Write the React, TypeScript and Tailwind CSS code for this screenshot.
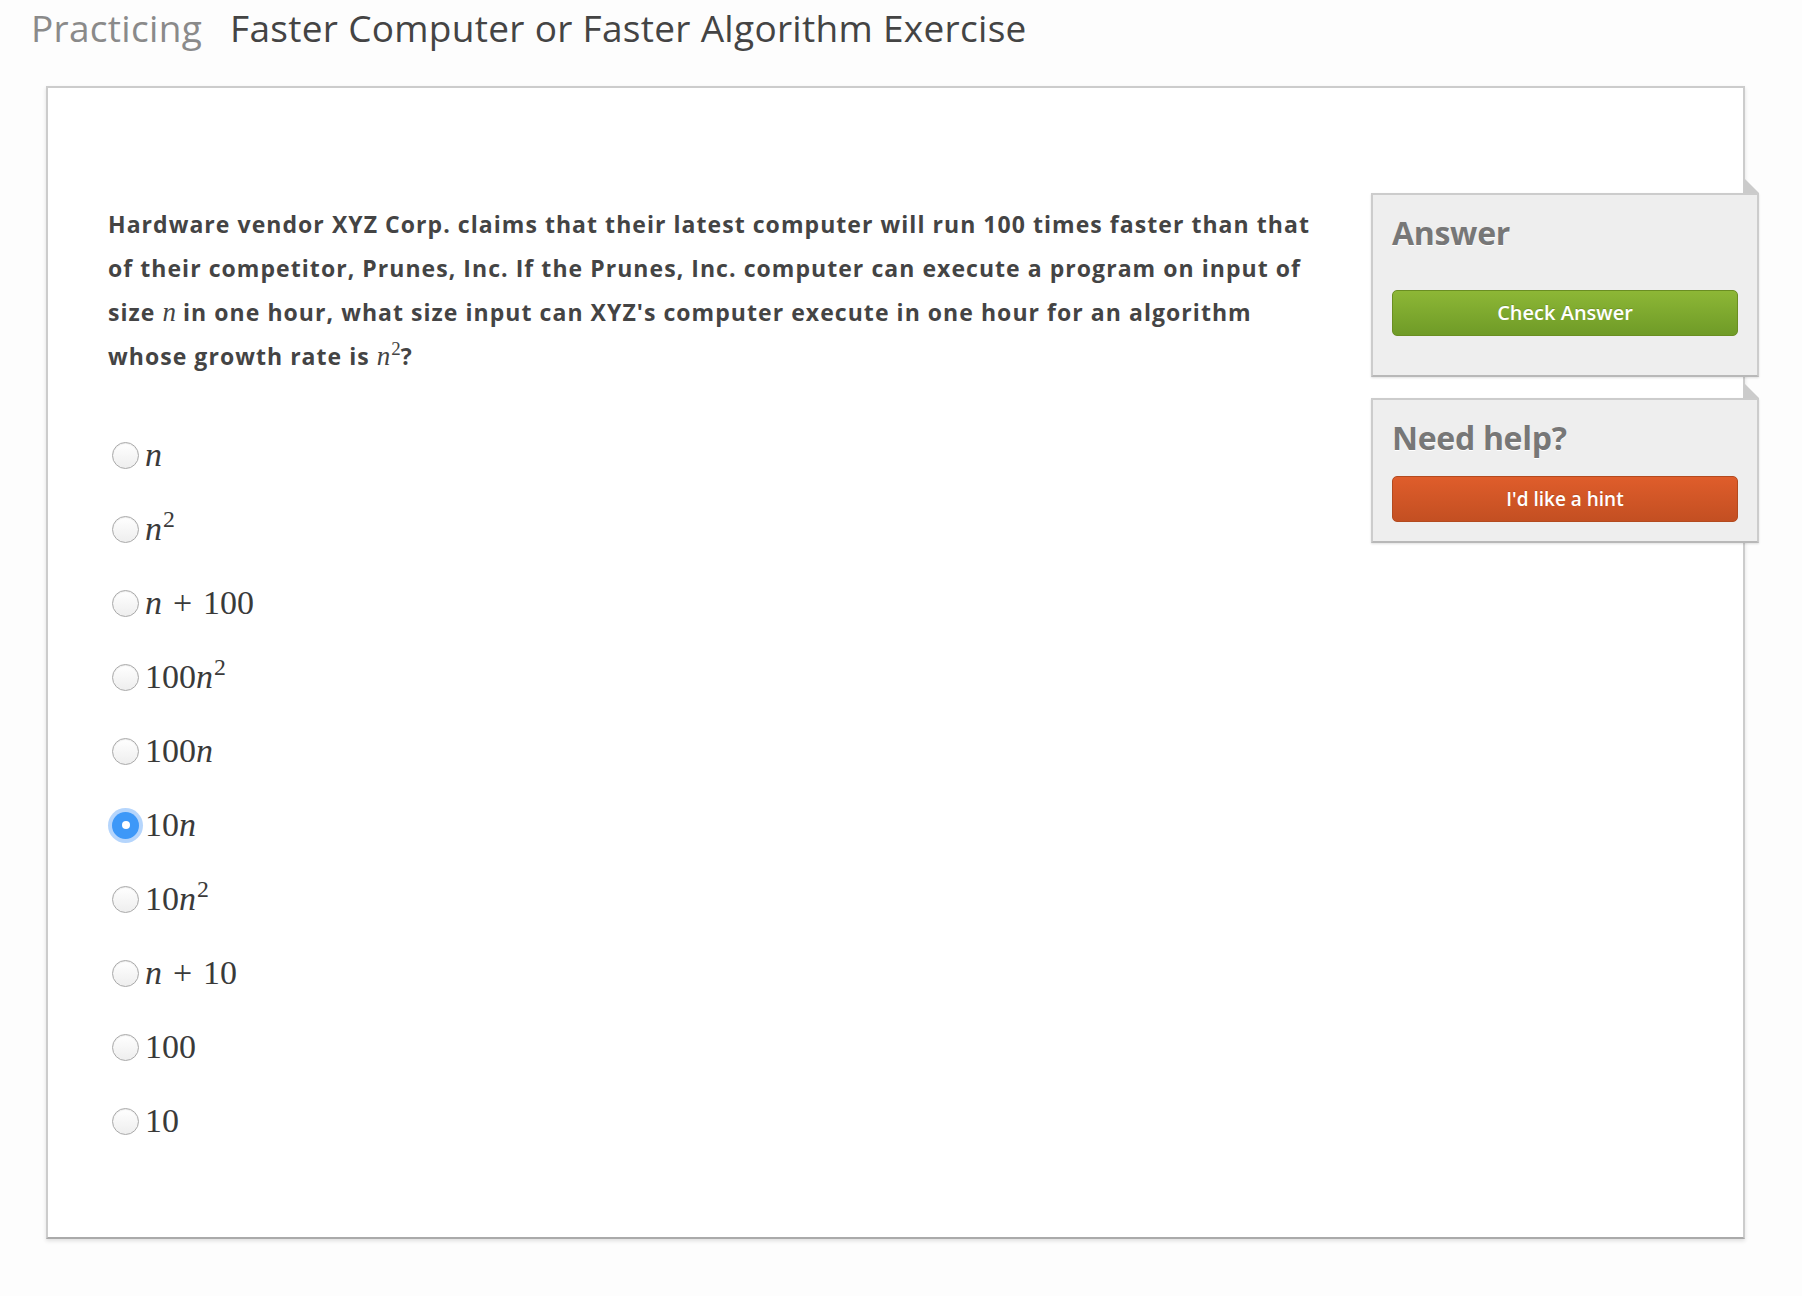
import type { ReactNode } from "react";

const OPTIONS: { key: string; body: ReactNode }[] = [
  { key: "n", body: <><V>n</V></> },
  { key: "n2", body: <><V>n</V><Sq /></> },
  { key: "n+100", body: <><V>n</V><Plus />100</> },
  { key: "100n2", body: <>100<V>n</V><Sq /></> },
  { key: "100n", body: <>100<V>n</V></> },
  { key: "10n", body: <>10<V>n</V></> },
  { key: "10n2", body: <>10<V>n</V><Sq /></> },
  { key: "n+10", body: <><V>n</V><Plus />10</> },
  { key: "100", body: <>100</> },
  { key: "10", body: <>10</> },
];

const SELECTED = "10n";

/* math bits — serif italic variable, raised exponent, spaced operator */
function V({ children }: { children: ReactNode }) {
  return <span className="italic">{children}</span>;
}

function Sq() {
  return <sup className="relative -top-[0.55em] ml-[1px] text-[0.7em] not-italic">2</sup>;
}

function Plus() {
  return <span className="mx-[0.32em]">+</span>;
}

function Radio({ checked }: { checked: boolean }) {
  if (checked) {
    return (
      <span className="flex h-[27px] w-[27px] shrink-0 items-center justify-center rounded-full bg-[#3d98f8] shadow-[0_0_0_4px_rgba(120,178,250,0.55)]">
        <span className="block h-[8px] w-[8px] rounded-full bg-white" />
      </span>
    );
  }
  return (
    <span className="block h-[27px] w-[27px] shrink-0 rounded-full border border-[#a9a9a9] bg-gradient-to-b from-white to-[#eeeeee] shadow-[inset_0_1px_1px_rgba(0,0,0,0.08)]" />
  );
}

function Fold() {
  return (
    <svg className="absolute -right-[2px] -top-[17px]" width="15" height="15" viewBox="0 0 15 15">
      <polygon points="0,0 0,15 15,15" fill="#cbcbcb" />
    </svg>
  );
}

function SideBox({ title, children, className }: { title: string; children: ReactNode; className: string }) {
  return (
    <div
      className={`relative w-[388px] border-2 border-[#cccccc] border-b-[#b8b8b8] bg-[#eeeeee] px-[19px] shadow-[0_1px_2px_rgba(0,0,0,0.12)] ${className}`}
    >
      <Fold />
      <h2 className="text-[32px] font-bold leading-[40px] tracking-[-0.3px] text-[#777777] [text-shadow:0_1px_0_#ffffff]">
        {title}
      </h2>
      {children}
    </div>
  );
}

const NVAR = "font-['Liberation_Serif',serif] text-[27px] font-normal tracking-normal";

export default function App() {
  return (
    <div className="min-h-screen bg-[#fdfdfd] pt-[6px] font-['Open_Sans',sans-serif] text-[#444444]">
      {/* ── heading ── */}
      <h1 className="flex pl-[31px] text-[37px] font-normal leading-[44px] tracking-[0.3px]">
        <span className="text-[#8a8a8a]">Practicing</span>
        <span className="ml-[28px] text-[#444444]">Faster Computer or Faster Algorithm Exercise</span>
      </h1>

      {/* ── exercise card ── */}
      <div className="ml-[46px] mt-[36px] flex h-[1153px] w-[1699px] items-start border-2 border-[#cccccc] border-b-[#aaaaaa] bg-white shadow-[0_2px_4px_rgba(0,0,0,0.12)]">
        <div className="w-[1323px] pl-[60px] pt-[114px]">
          <p className="w-[1260px] text-[23px] font-bold leading-[44px] tracking-[1.05px] text-[#444444]">
            Hardware vendor XYZ Corp. claims that their latest computer will run 100 times faster than that
            <br />
            of their competitor, Prunes, Inc. If the Prunes, Inc. computer can execute a program on input of
            <br />
            size <span className={`${NVAR} italic`}>n</span> in one hour, what size input can XYZ's computer
            execute in one hour for an algorithm
            <br />
            whose growth rate is{" "}
            <span className={NVAR}>
              <V>n</V>
              <Sq />
            </span>
            ?
          </p>

          <ul className="mt-[40px] flex flex-col">
            {OPTIONS.map((o) => (
              <li key={o.key} className="flex h-[74px] items-center">
                <span className="ml-[4px] block">
                  <Radio checked={o.key === SELECTED} />
                </span>
                <span className="ml-[6px] whitespace-nowrap font-['Liberation_Serif',serif] text-[34px] leading-[40px] text-[#3a3a3a]">
                  {o.body}
                </span>
              </li>
            ))}
          </ul>
        </div>

        {/* ── sidebar ── */}
        <div className="-mr-[16px] mt-[105px] flex flex-col gap-[21px]">
          <SideBox title="Answer" className="pb-[39px] pt-[18px]">
            <button className="mt-[37px] h-[46px] w-full rounded-[5px] border border-[#6a8e22] bg-gradient-to-b from-[#8db736] to-[#6f9b27] text-[20px] font-semibold text-white [text-shadow:0_-1px_0_rgba(0,0,0,0.15)]">
              Check Answer
            </button>
          </SideBox>
          <SideBox title="Need help?" className="pb-[19px] pt-[18px]">
            <button className="mt-[18px] h-[46px] w-full rounded-[5px] border border-[#b34a1f] bg-gradient-to-b from-[#df5d2b] to-[#c34f22] text-[19px] font-semibold text-white [text-shadow:0_-1px_0_rgba(0,0,0,0.15)]">
              I'd like a hint
            </button>
          </SideBox>
        </div>
      </div>
    </div>
  );
}
